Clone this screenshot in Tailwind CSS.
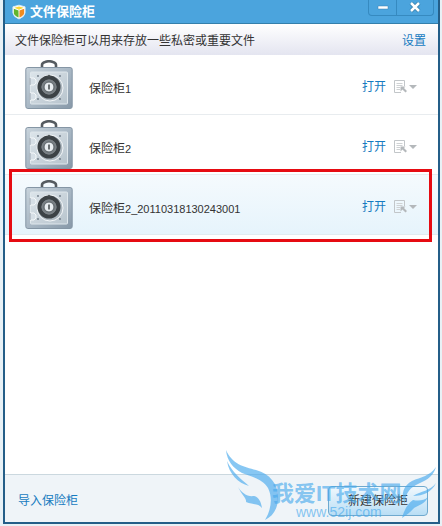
<!DOCTYPE html>
<html lang="zh-CN">
<head>
    <meta charset="UTF-8">
    <meta name="viewport" content="width=device-width, initial-scale=1.0">
    <title>文件保险柜</title>
    <script src="https://cdn.jsdelivr.net/npm/@tailwindcss/browser@4"></script>
</head>
<body class="bg-[#e8f1f6] font-['Liberation_Sans','Noto_Sans_CJK_SC',sans-serif] text-xs text-[#333]">

<!-- shared icons -->
<svg class="absolute h-0 w-0">
    <defs>
        <linearGradient id="metal" x1="0" y1="0" x2="1" y2="1">
            <stop offset="0" stop-color="#c9d4dc"/>
            <stop offset=".5" stop-color="#a9b8c5"/>
            <stop offset="1" stop-color="#8798a8"/>
        </linearGradient>
        <linearGradient id="door" x1="0" y1="0" x2="1" y2="1">
            <stop offset="0" stop-color="#dce4ea"/>
            <stop offset="1" stop-color="#b8c4cd"/>
        </linearGradient>
    </defs>
    <symbol id="safe" viewBox="0 0 48 50">
        <path d="M17 8V5Q17 3 20 2Q24 .5 28 2Q31 3 31 5V8" fill="none" stroke="#555b60" stroke-width="2.6"/>
        <rect x=".8" y="7.5" width="46.4" height="41" rx="2" fill="url(#metal)" stroke="#8596a5"/>
        <rect x="5.5" y="12" width="37" height="32" rx="1" fill="url(#door)" stroke="#dfe7ec"/>
        <path d="M5 18H9L11 20V23L9 25H5ZM5 33H9L11 35V38L9 40H5Z" fill="#d6dfe6" stroke="#f5f8fa"/>
        <path d="M5 18V25M5 33V40" stroke="#8c99a5"/>
        <g fill="#6d7a85">
            <circle cx="13" cy="16" r=".9"/><circle cx="35" cy="16" r=".9"/>
            <circle cx="13" cy="39" r=".9"/><circle cx="35" cy="39" r=".9"/>
        </g>
        <circle cx="25" cy="28" r="13" fill="#aeb9c1" stroke="#f3f6f8"/>
        <circle cx="24" cy="27" r="9.5" fill="#777e83" stroke="#3c4246" stroke-width="4"/>
        <circle cx="24" cy="27" r="7" fill="none" stroke="#7d8489" stroke-width="1"/>
        <circle cx="24" cy="27" r="5" fill="#e8edf0" stroke="#596166"/>
        <path d="M24 24.500V29.500" stroke="#4a5054" stroke-width="1.600"/>
        <path d="M22 16.500H26L24 14.500Z" fill="#4a5054"/>
    </symbol>
    <symbol id="menu" viewBox="0 0 24 14">
        <path d="M10.5 6V.5H.5V12.5H7" fill="none" stroke="#c2c6c9"/>
        <path d="M2.5 3.5H8.5M2.5 5.5H8.5M2.5 7.5H6M2.5 9.5H6" stroke="#cfd2d4"/>
        <path d="M6.5 6.5H11.5L10 8L13 11L11.5 12.5L8.5 9.5L6.5 11.5Z" fill="#b4b8bb"/>
        <path d="M15 5H23L19 9Z" fill="#b4b8bb"/>
    </symbol>
</svg>

<div class="relative flex min-h-screen flex-col pr-0.5 pb-0.5 pl-[3px]">
    <main class="flex flex-1 flex-col border-x-2 border-b-2 border-[#245e88] bg-white">
        <header class="flex h-6 items-start justify-between border-b border-[#347fab] bg-[#4ba4dd] pr-1 pl-[7px]">
            <h1 class="flex items-center gap-1 pt-1 text-[13px] leading-4 font-bold text-white">
                <svg class="h-4 w-3.5" viewBox="0 0 15 16">
                    <path d="M7.5 .7L14 2.5V9Q13.5 13 7.5 15.5Q1.5 13 1 9V2.5Z" fill="#fff" stroke="#d9eaf2"/>
                    <path d="M2.5 3.5L7.5 2L12.5 3.5L7.5 5.5Z" fill="#fbd735"/>
                    <path d="M2 4.5L7 6.5V14Q2 11.5 2 9Z" fill="#62b52d"/>
                    <path d="M8 6.5L13 4.5V9Q13 11.5 8 14Z" fill="#f08b1d"/>
                </svg>
                文件保险柜
            </h1>
            <div class="flex h-4 overflow-hidden rounded-b border-x border-b border-[#368ac0]">
                <button class="flex w-7 items-center justify-center border-r border-[#368ac0]" aria-label="最小化">
                    <svg class="h-3 w-3" viewBox="0 0 12 12"><path d="M1 4H11V7H1Z" fill="#fff" stroke="#397fac" stroke-width=".5"/></svg>
                </button>
                <button class="flex w-9 items-center justify-center" aria-label="关闭">
                    <svg class="h-3 w-3" viewBox="0 0 12 12"><path d="M2 1L10 9M10 1L2 9" stroke="#347da9" stroke-width="4"/><path d="M2 1L10 9M10 1L2 9" stroke="#fff" stroke-width="2.5"/></svg>
                </button>
            </div>
        </header>

        <div class="flex h-[31px] items-center justify-between bg-linear-to-b from-white to-[#e4e5f0] pt-0.5 pr-3 pl-2.5">
            <p>文件保险柜可以用来存放一些私密或重要文件</p>
            <a href="#" class="text-[#167bc0]">设置</a>
        </div>

        <ul class="flex-1">
            <li class="flex h-[60px] items-center border-b border-[#e8ecef] px-5">
                <svg class="h-[50px] w-12"><use href="#safe"/></svg>
                <span class="flex-1 pt-2 pl-4">保险柜<span class="text-[11px]">1</span></span>
                <a href="#" class="pt-1 text-[#167bc0]">打开</a>
                <button class="ml-2 pt-1" aria-label="更多操作"><svg class="h-3.5 w-6"><use href="#menu"/></svg></button>
            </li>
            <li class="flex h-[60px] items-center border-b border-[#e8ecef] px-5">
                <svg class="h-[50px] w-12"><use href="#safe"/></svg>
                <span class="flex-1 pt-2 pl-4">保险柜<span class="text-[11px]">2</span></span>
                <a href="#" class="pt-1 text-[#167bc0]">打开</a>
                <button class="ml-2 pt-1" aria-label="更多操作"><svg class="h-3.5 w-6"><use href="#menu"/></svg></button>
            </li>
            <li class="relative flex h-[60px] items-center border-b border-[#e1ebf0] bg-linear-to-b from-[#f5fafd] to-[#e6f4fc] px-5">
                <svg class="h-[50px] w-12"><use href="#safe"/></svg>
                <span class="flex-1 pt-2 pl-4">保险柜<span class="text-[11px]">2_20110318130243001</span></span>
                <a href="#" class="pt-1 text-[#167bc0]">打开</a>
                <button class="ml-2 pt-1" aria-label="更多操作"><svg class="h-3.5 w-6"><use href="#menu"/></svg></button>
                <span class="pointer-events-none absolute -top-1.5 right-1.5 -bottom-2 left-1 border-3 border-[#e60b12]"></span>
            </li>
        </ul>

        <footer class="flex h-12 items-center justify-between border-t border-[#cbd8df] bg-[#eff4f8] pt-1 pr-2.5 pl-[13px]">
            <a href="#" class="text-[#167bc0]">导入保险柜</a>
            <button class="h-[30px] w-[100px] rounded-sm border border-[#6fa9ce] bg-linear-to-b from-[#f0f8fd] to-[#b9def5]">新建保险柜</button>
        </footer>
    </main>

    <!-- watermark -->
    <div class="pointer-events-none absolute right-1 bottom-1 h-[74px] w-[214px] text-[#47a9ec]/65">
        <svg class="absolute inset-0 h-full w-full" viewBox="0 0 214 74" fill="currentColor">
            <path d="M2 2C8 16 20 19 32 22C46 26 54 36 54 49C54 61 49 68 41 72C47 62 49 50 44 40C38 30 27 29 18 25C9 20 3 13 2 2Z"/>
            <path d="M3 13C8 24 17 31 25 38C14 35 5 26 3 13Z"/>
            <path d="M14 39C18 45 23 49 30 48C35 49 37 54 38 60C34 55 29 57 22 54C23 51 18 47 14 39Z"/>
            <path d="M212 19C209 30 200 33 192 37C184 41 181 48 181 56C176 46 180 37 188 33C197 29 206 28 212 19Z"/>
            <path d="M212 35C208 44 199 48 189 48C197 43 206 43 212 35Z"/>
            <path d="M204 49C201 56 195 57 190 60C187 64 182 67 178 70C180 63 183 56 189 52C194 53 200 53 204 49Z"/>
        </svg>
        <div class="absolute top-[30px] left-12 text-[22px] leading-8 font-bold whitespace-nowrap">我爱IT技术网</div>
        <div class="absolute top-[54px] left-[72px] text-sm leading-5 whitespace-nowrap">www.52ij.com</div>
    </div>
</div>
</body>
</html>
